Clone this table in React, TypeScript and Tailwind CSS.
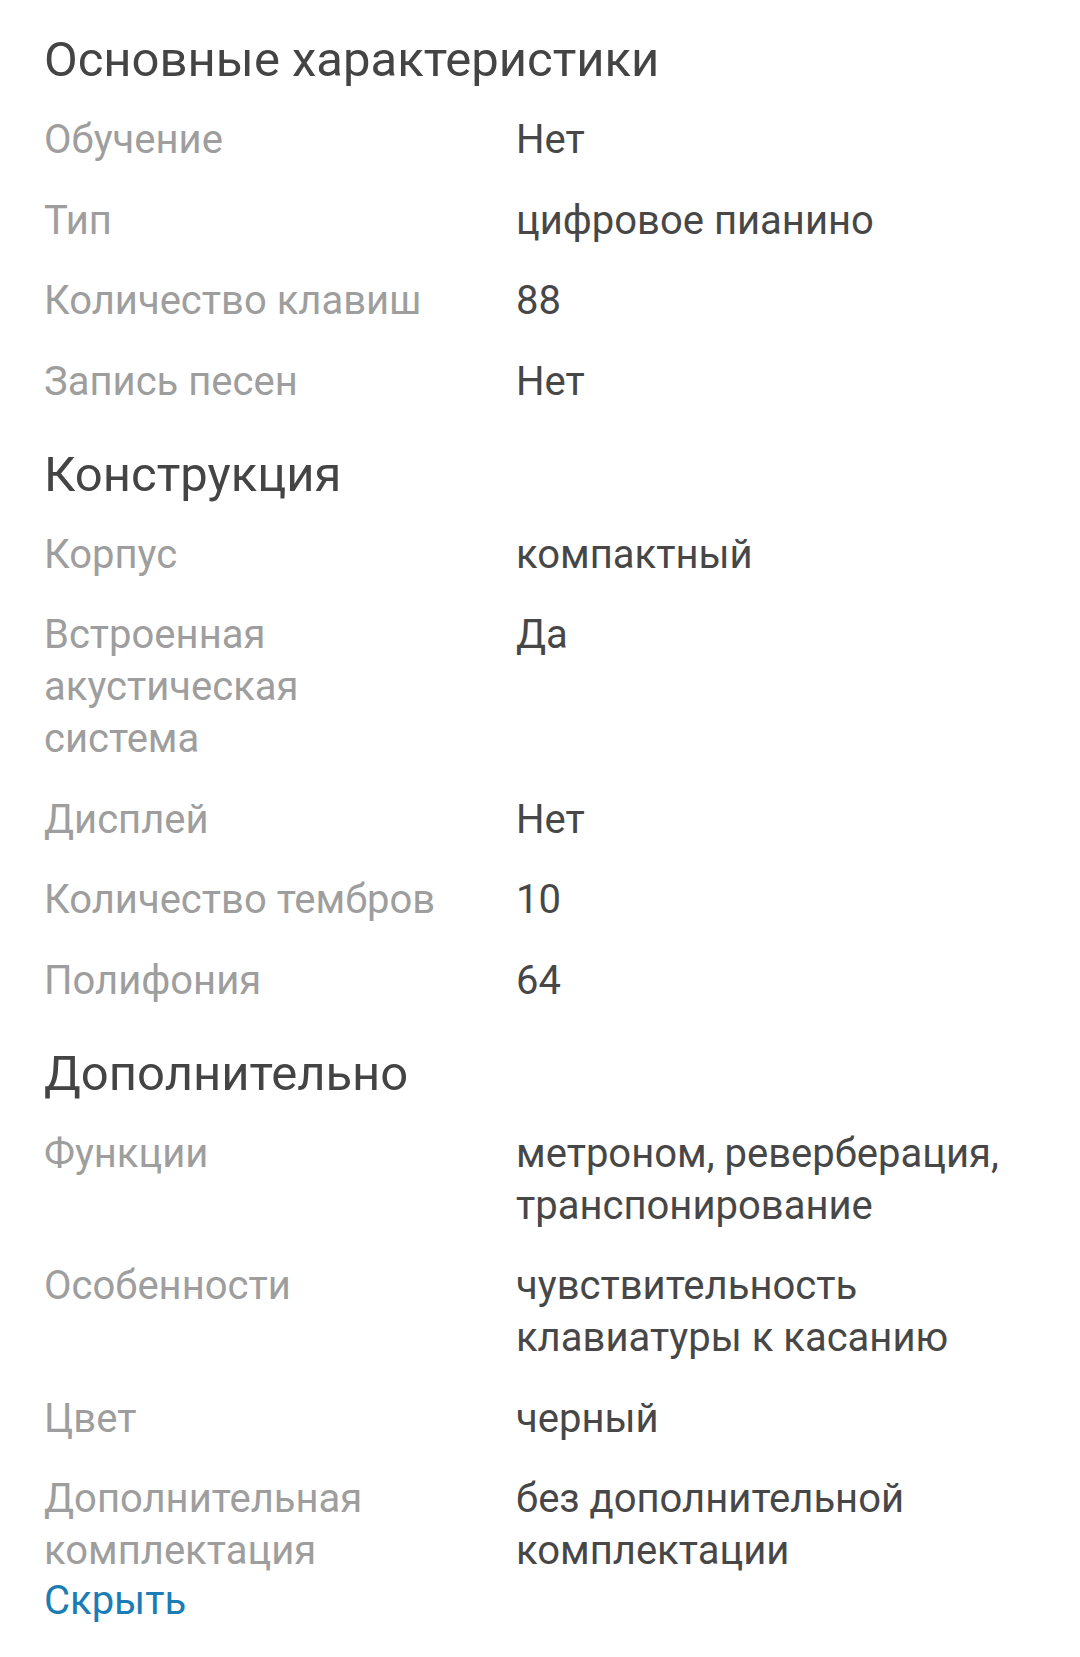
const sections = [
  {
    title: "Основные характеристики",
    rows: [
      ["Обучение", "Нет"],
      ["Тип", "цифровое пианино"],
      ["Количество клавиш", "88"],
      ["Запись песен", "Нет"],
    ],
  },
  {
    title: "Конструкция",
    rows: [
      ["Корпус", "компактный"],
      ["Встроенная акустическая система", "Да"],
      ["Дисплей", "Нет"],
      ["Количество тембров", "10"],
      ["Полифония", "64"],
    ],
  },
  {
    title: "Дополнительно",
    rows: [
      ["Функции", "метроном, реверберация, транспонирование"],
      ["Особенности", "чувствительность клавиатуры к касанию"],
      ["Цвет", "черный"],
      ["Дополнительная комплектация", "без дополнительной комплектации"],
    ],
  },
];

export default function App() {
  return (
    <div className="min-h-[1657px] w-[1080px] bg-white px-[44px] pt-[34px] font-['Roboto',sans-serif]">
      {sections.map((section, i) => (
        <section key={section.title} className={i > 0 ? "mt-[41px]" : ""}>
          <h2 className="text-[49px] leading-[52px] font-normal text-[#444444]">
            {section.title}
          </h2>
          <dl className="mt-[28px] flex flex-col gap-[28.5px]">
            {section.rows.map(([label, value]) => (
              <div key={label} className="grid grid-cols-[405px_1fr] gap-[67px]">
                <dt className="text-[40px] leading-[52px] text-[#9e9e9e]">{label}</dt>
                <dd className="text-[40px] leading-[52px] text-[#474747]">{value}</dd>
              </div>
            ))}
          </dl>
        </section>
      ))}
      <button className="-mt-[2px] block text-[40px] leading-[52px] text-[#1a7db5]">Скрыть</button>
    </div>
  );
}
